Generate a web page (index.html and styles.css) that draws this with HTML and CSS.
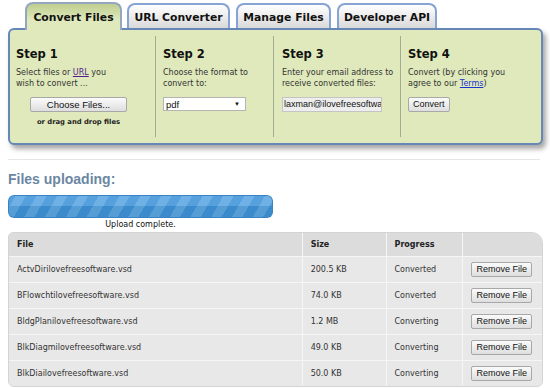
FILE: index.html
```html
<!DOCTYPE html>
<html><head><title>Convert Files</title>
<link rel="stylesheet" href="styles.css">
</head>
<body>
<div class="tabs">
  <div class="tab active t1">Convert Files</div>
  <div class="tab t2">URL Converter</div>
  <div class="tab t3">Manage Files</div>
  <div class="tab t4">Developer API</div>
</div>

<div class="panel">
  <div class="step s1">
    <h2>Step 1</h2>
    <p>Select files or <a href="#" class="visited">URL</a> you<br>wish to convert ...</p>
    <div class="center">
      <button class="btn choose">Choose Files...</button>
      <div class="drag">or drag and drop files</div>
    </div>
  </div>
  <div class="step s2">
    <h2>Step 2</h2>
    <p>Choose the format to<br>convert to:</p>
    <div class="select"><span>pdf</span><span class="arrow">&#9660;</span></div>
  </div>
  <div class="step s3">
    <h2>Step 3</h2>
    <p>Enter your email address to<br>receive converted files:</p>
    <div class="email">laxman@ilovefreesoftwa</div>
  </div>
  <div class="step s4">
    <h2>Step 4</h2>
    <p>Convert (by clicking you<br>agree to our <a href="#">Terms</a>)</p>
    <button class="btn">Convert</button>
  </div>
</div>

<hr class="rule">

<h3>Files uploading:</h3>
<div class="progress"></div>
<div class="done">Upload complete.</div>

<table class="files">
  <tr class="head"><th class="c1">File</th><th class="c2">Size</th><th class="c3">Progress</th><th class="c4"></th></tr>
  <tr><td>ActvDirilovefreesoftware.vsd</td><td>200.5 KB</td><td>Converted</td><td class="c4"><button class="btn">Remove File</button></td></tr>
  <tr><td>BFlowchtilovefreesoftware.vsd</td><td>74.0 KB</td><td>Converted</td><td class="c4"><button class="btn">Remove File</button></td></tr>
  <tr><td>BldgPlanilovefreesoftware.vsd</td><td>1.2 MB</td><td>Converting</td><td class="c4"><button class="btn">Remove File</button></td></tr>
  <tr><td>BlkDiagmilovefreesoftware.vsd</td><td>49.0 KB</td><td>Converting</td><td class="c4"><button class="btn">Remove File</button></td></tr>
  <tr><td>BlkDiailovefreesoftware.vsd</td><td>50.0 KB</td><td>Converting</td><td class="c4"><button class="btn">Remove File</button></td></tr>
</table>
</body>
</html>
```

FILE: styles.css
```css
body {
	margin: 0; padding: 0 7px 0 8px;
	background: white; color: #333;
	font-family: "DejaVu Sans", Verdana, sans-serif;
	font-size: 8px;
}

.tabs {
	display: flex;
	padding: 2px 0 0 17px;
	height: 26px;
}
.tab {
	position: relative; z-index: 2;
	height: 25px; margin-top: 1px;
	border: 2px solid #86a3d3; border-bottom: none;
	border-radius: 8px 8px 0 0;
	background: linear-gradient(#ffffff, #d9d9d9);
	font-weight: bold; font-size: 10.8px; color: #111;
	text-align: center;
	line-height: 25px;
	box-sizing: border-box;
}
.tab.active {
	height: 28px; margin-top: 0; line-height: 28px;
	background: linear-gradient(#bfcd8f, #dfe9bb 60%);
	border-color: #93a8c0;
}
.t1 { width: 97px; }
.t2 { width: 103px; margin-left: 5px; }
.t3 { width: 95px; margin-left: 6px; }
.t4 { width: 100px; margin-left: 6px; }

.panel {
	position: relative; z-index: 1;
	display: flex;
	height: 117px;
	background: #dfe9bb;
	border: 2px solid #6787b8;
	border-radius: 6px;
	box-shadow: 3px 4px 5px rgba(0,0,0,0.35);
	box-sizing: border-box;
	padding: 6px 0;
}
.step {
	box-sizing: border-box;
	border-left: 1px solid #a4ab94;
	white-space: nowrap;
}
.s1 { width: 145px; padding-left: 6px; border-left: none; }
.s2 { width: 118px; padding-left: 7px; }
.s3 { width: 127px; padding-left: 8px; }
.s4 { flex: 1; padding-left: 7px; }

h2 {
	margin: 11px 0 6px; font-size: 11.5px; line-height: 14px; color: #111;
}
p { margin: 0 0 8px; line-height: 11px; color: #333; }
a { color: #1a33cc; }
a.visited { color: #551a8b; }

.center { width: 125px; text-align: center; }
.drag { font-weight: bold; font-size: 6.8px; margin-top: 6px; color: #222; }

.btn {
	font-family: "Liberation Sans", Arial, sans-serif;
	font-size: 9px; color: #111;
	background: linear-gradient(#fbfbfb, #dedede);
	border: 1px solid #a8a8a8; border-radius: 2px;
	height: 15px; padding: 0 4px; line-height: 13px;
	white-space: nowrap;
}
.choose { width: 97px; font-size: 9.5px; }

.select {
	display: flex; justify-content: space-between; align-items: center;
	width: 83px; height: 14px; box-sizing: border-box;
	background: white; border: 1px solid #b5b5b5;
	font-family: "Liberation Sans", Arial, sans-serif; font-size: 9.5px;
	padding: 0 5px 0 2px; color: #111;
}
.arrow { font-size: 6px; }
.email {
	width: 100px; height: 15px; box-sizing: border-box;
	background: #eeeeee; border: 1px solid #c4c4c4;
	font-family: "Liberation Sans", Arial, sans-serif; font-size: 9px;
	padding-left: 1px; line-height: 13px; color: #111; overflow: hidden;
}

.rule {
	margin: 14px 3px 0 0; border: none; border-top: 1px solid #e6e6e6;
}

h3 {
	margin: 11px 0 8px; font-size: 14px; line-height: 16px;
	font-family: "Liberation Sans", Arial, sans-serif;
	color: #6b87a3;
}
.progress {
	width: 265px; height: 23px; border-radius: 6px;
	background:
		linear-gradient(rgba(255,255,255,0.12) 50%, rgba(0,0,0,0.06) 50%),
		repeating-linear-gradient(-60deg, #3f93d8 0 9px, #5ba6e2 9px 18px);
	box-shadow: inset 0 0 0 1px #3a82c4;
}
.done {
	width: 265px; text-align: center; margin-top: 1px; color: #111;
	line-height: 12px;
}

.files {
	width: 535px; border-collapse: separate; border-spacing: 0; margin-top: 1px;
	background: #e8e8e8;
	border: 1px solid #d4d4d4;
	border-radius: 5px 11px 6px 6px; overflow: hidden;
	font-size: 8px;
}
.files th, .files td {
	height: 26px; padding: 0 0 0 8px; text-align: left;
	border-left: 1px solid #f6f6f6;
	border-top: 1px solid #f6f6f6;
	box-sizing: border-box;
}
.files th { background: #dcdcdc; height: 23px; color: #222; border-top: none; }
.files td:first-child, .files th:first-child { border-left: none; }
.files td { color: #333; }
.c1 { width: 293px; }
.c2 { width: 84px; }
.c3 { width: 77px; }
.files td.c4 { text-align: right; padding-right: 10px; }
```
